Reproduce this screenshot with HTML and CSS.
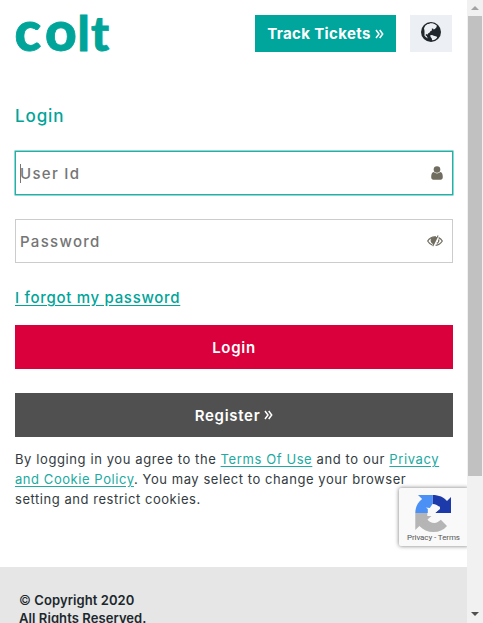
FILE: index.html
```html
<!DOCTYPE html>
<html lang="en">
<head>
<meta charset="utf-8">
<title>Login</title>
<link rel="stylesheet" href="styles.css">
</head>
<body>
<div class="page">
  <header class="header">
    <svg class="logo" width="98" height="44" viewBox="0 0 98 44"><text class="wordmark" y="36" x="-.5 30 62.5 76"><tspan class="wordmark-round">co</tspan>lt</text></svg>
    <a class="track"><span class="track-text">Track Tickets</span><svg class="chevrons" width="9" height="10" viewBox="0 0 9 10"><path d="M1 1l3 4-3 4M4.7 1l3 4-3 4"/></svg></a>
    <button class="globe" aria-label="Language"><svg width="20" height="20" viewBox="0 0 20 20"><circle cx="10" cy="10" r="10" fill="#20272c"/><path fill="#eceff3" d="M4.2 3.8L6.6 1.9l1.6.2.8-.8 2.3-.1 2.2.8 2.3 1.6-.3 1.6-1.6 1.7-1.3.5-.6-1-1.3.4.4 1.5-1.7.9-1 1.6-1.4.7-.3 1.2-.8-.8-1.2.6.1 1.2 1.1.2.2 1.5 1.2.5-.6.4-1.7-1.1-1.5-1.4L3.5 9 3 6.3zM9.2 13.2l1.8-.3 1.8.9 2.8.6.6 1.2-1.4 1.4-1.8 1-1.9.3-.3-1.7-1.2-1.5z"/></svg></button>
  </header>
  <main class="main">
    <h1 class="title">Login</h1>
    <div class="field focused"><span class="caret"></span><span class="user-label">User Id</span>
      <svg class="user-icon" width="12" height="14" viewBox="0 0 12 14"><circle cx="6" cy="3.5" r="3.3"/><path d="M2.6 6Q6 8.8 9.4 6C11 6.3 11.8 8.2 11.8 11c0 1.8-.9 2.7-2.1 2.7H2.3C1.1 13.7.2 12.8.2 11 .2 8.2 1 6.3 2.6 6z"/></svg></div>
    <div class="field"><span class="pass-label">Password</span>
      <svg class="eye-icon" width="16" height="14" viewBox="0 0 16 14"><path class="eye-line" d="M5.2 11C3.2 10.2 1.7 8.8.7 7c1.6-2.8 4-4.2 7.3-4.2h1M11.6 3.6c1.6.8 2.8 1.9 3.7 3.4-1.5 2.6-3.7 4-6.7 4.3M4.8 4.2C3.8 6 4.2 8 5.9 9.3M11.8 5.4c.3 1.8-.4 3.2-2 4"/><path class="eye-fill" d="M10.6 1.2l1 .5-5.4 10.7-1-.6.8-1.7C4.5 8.8 4 7.2 4.4 5.5 5 3.6 6.6 2.7 8.3 2.9l1.5.2z"/></svg></div>
    <a class="forgot">I forgot my password</a>
    <button class="button login"><span>Login</span></button>
    <button class="button register"><span>Register</span><svg class="chevrons" width="9" height="10" viewBox="0 0 9 10"><path d="M1 1l3 4-3 4M4.7 1l3 4-3 4"/></svg></button>
    <p class="terms"><span class="line line-one">By logging in you agree to the <a>Terms Of Use</a> and to our <a>Privacy</a></span><span class="line line-two"><a>and Cookie Policy</a>. You may select to change your browser</span><span class="line line-three">setting and restrict cookies.</span></p>
  </main>
  <footer class="footer"><div class="copy-one"><span class="copyright">©</span> Copyright 2020</div><div class="copy-two">All Rights Reserved.</div></footer>
  <aside class="recaptcha">
    <svg width="38" height="38" viewBox="0 0 38 38"><path fill="#1c3aa9" d="M18.5 1C25 1 30 3.2 33 7l4-4v16H21l5-5c-1.8-2.6-4.4-4-7.5-4z"/><path fill="#4a90f5" d="M18.5 1H4l4.1 4.1C3.8 8.5 1.3 13 1.3 19h16.2v-2.2l-2.8-2.6 3.8-.2z"/><path fill="#b5b5b5" d="M1.3 19v17l4.1-4.1C9 35.7 13.7 38 19.5 38c5.5 0 10-2 13.5-6l-6.2-6.2c-2 2-4.2 3.2-6.3 3.2-3.3 0-5.5-1.2-7-3.4l4-3.6h-4.2V19z"/><path fill="#f9f9f9" d="M18.5 10l3.3 2.8 4-.4.2 2.6-5 4h-7.2V15l-2-1.5 4 .5z"/></svg>
    <span class="captcha-text">Privacy - Terms</span>
  </aside>
</div>
<div class="scrollbar"><svg class="arrow up" width="8" height="4" viewBox="0 0 8 4"><path d="M0 4l4-4 4 4z"/></svg><div class="thumb"></div><svg class="arrow down" width="8" height="4" viewBox="0 0 8 4"><path d="M0 0h8L4 4z"/></svg></div>
</body>
</html>
```
FILE: styles.css
```css
* { box-sizing: border-box; }
body { margin: 0; height: 623px; overflow: hidden; display: flex; background: #fff; color: #333b41; font-family: Inter, "Open Sans", sans-serif; }
button { border: 0; padding: 0; font-family: inherit; }
.page { width: 467px; height: 623px; overflow: hidden; position: relative; }
.header { height: 67px; display: flex; align-items: flex-start; padding: 15px 15px 0; }
.logo { margin-right: auto; overflow: visible; }
.wordmark { font: 900 48px Lato, sans-serif; fill: #00a499; stroke: #00a499; stroke-width: .8px; }
.wordmark-round { font-size: 55px; }
.track { width: 141px; height: 37px; background: #00a69c; color: #fff; display: flex; align-items: center; justify-content: center; gap: 4px; font-size: 15px; font-weight: 700; letter-spacing: .35px; white-space: nowrap; }
.chevrons path { fill: none; stroke: #fff; stroke-width: 1.5; }
.globe { width: 42px; height: 37px; margin-left: 14px; background: #eceff3; display: flex; justify-content: center; padding-top: 7px; }
.main { padding: 0 14px 0 15px; height: 500px; }
.title { margin: 0; padding-top: 37px; height: 84px; line-height: 24px; font-size: 17px; font-weight: 500; color: #00a499; letter-spacing: .9px; }
.field { height: 44px; margin-bottom: 24px; border: 1px solid #ccc; display: flex; align-items: center; justify-content: space-between; padding: 0 9px 0 4px; color: #757575; font-size: 15px; font-weight: 500; position: relative; }
.field.focused { border-color: #22b0a7; box-shadow: 0 0 0 .5px #22b0a7; }
.user-label, .pass-label { letter-spacing: 1.3px; }
.caret { position: absolute; left: 4px; top: 12px; width: 1px; height: 19px; background: #777; }
.user-icon { fill: #706d60; }
.eye-line { fill: none; stroke: #706d60; stroke-width: 1.2; }
.eye-fill { fill: #706d60; }
.forgot { display: block; height: 38px; line-height: 22px; color: #00a499; font-size: 15px; font-weight: 500; text-decoration: underline; text-underline-offset: 2px; letter-spacing: .7px; }
.button { width: 438px; height: 44px; display: flex; align-items: center; justify-content: center; gap: 4px; color: #fff; font-size: 15px; font-weight: 600; letter-spacing: .7px; }
.login { background: #da003b; margin-bottom: 24px; }
.register { background: #505050; }
.terms { margin: 12px 0 0; font-size: 13px; line-height: 20px; }
.line { display: block; white-space: nowrap; }
.line a { color: #20aaa1; text-decoration: underline; text-underline-offset: 2px; }
.line-one { letter-spacing: .6px; }
.line-two { letter-spacing: .56px; }
.line-three { letter-spacing: .54px; }
.footer { background: #e6e6e6; height: 56px; padding: 24px 19px 0; color: #20272c; font-size: 13px; font-weight: 600; line-height: 18px; letter-spacing: .08px; white-space: nowrap; }
.copyright { font-weight: 400; }
.recaptcha { position: absolute; left: 399px; top: 488px; width: 70px; height: 58px; background: #f9f9f9; border-radius: 2px; box-shadow: 0 0 4px #777; padding: 6px 0 0 15px; }
.recaptcha svg { display: block; }
.captcha-text { display: block; margin: 0 0 0 -7px; font: 8px/12px Roboto, sans-serif; letter-spacing: -.1px; color: #555; white-space: nowrap; }
.scrollbar { width: 16px; background: #f1f1f1; display: flex; flex-direction: column; align-items: center; }
.thumb { width: 14px; height: 460px; background: #c1c1c1; }
.arrow { flex: none; }
.up { margin: 6px 0; fill: #a3a3a3; }
.down { margin-top: auto; margin-bottom: 7px; fill: #505050; }
```
